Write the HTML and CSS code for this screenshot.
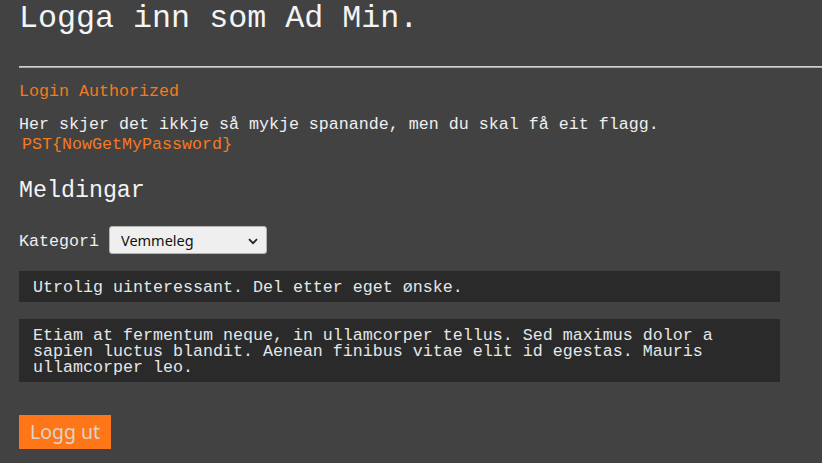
FILE: index.html
```html
<!DOCTYPE html>
<html lang="no">
<head>
<meta charset="utf-8">
<title>Ad Min</title>
<link rel="stylesheet" href="styles.css">
</head>
<body>
<main class="page">
  <h1 class="title">Logga inn som Ad Min.</h1>
  <hr class="rule">
  <p class="status">Login Authorized</p>
  <p class="intro">Her skjer det ikkje så mykje spanande, men du skal få eit flagg. <span class="flag">PST{NowGetMyPassword}</span></p>
  <h2 class="heading">Meldingar</h2>
  <div class="filter">
    <label class="filter-label" for="kat">Kategori</label>
    <select class="filter-select" id="kat">
      <option>Vemmeleg</option>
    </select>
  </div>
  <div class="messages">
    <div class="message">Utrolig uinteressant. Del etter eget ønske.</div>
    <div class="message">Etiam at fermentum neque, in ullamcorper tellus. Sed maximus dolor a sapien luctus blandit. Aenean finibus vitae elit id egestas. Mauris ullamcorper leo.</div>
  </div>
  <button class="logout" type="button">Logg ut</button>
</main>
</body>
</html>
```

FILE: styles.css
```css
html, body {
  margin: 0;
  padding: 0;
  background: #424242;
  color: #f0f0f0;
  overflow: hidden;
}

.page {
  padding: 1px 0 0 19px;
  font-family: "Liberation Mono", "Courier New", monospace;
  font-size: 16.67px;
}

.title {
  margin: 0;
  font-family: "Liberation Mono", "Courier New", monospace;
  font-size: 31.7px;
  font-weight: normal;
  line-height: 36px;
  color: #f4f4f4;
}

.rule {
  margin: 29px 0 0 0;
  border: 0;
  border-top: 1px solid #cfcfcf;
  border-bottom: 1px solid #a8a8a8;
  height: 0;
}

.status {
  margin: 13.5px 0 0 0;
  line-height: 20px;
  color: #f47a20;
}

.intro {
  margin: 13px 0 0 0;
  line-height: 20px;
  width: 700px;
  color: #efefef;
}

.flag {
  color: #f47a20;
  padding-left: 3px;
}

.heading {
  margin: 23px 0 0 0;
  font-family: "Liberation Mono", "Courier New", monospace;
  font-size: 23.3px;
  font-weight: normal;
  line-height: 26.4px;
  color: #f4f4f4;
}

.filter {
  display: flex;
  align-items: center;
  gap: 10px;
  margin-top: 22px;
  height: 28px;
}

.filter-label {
  line-height: 20px;
  padding-top: 4px;
  color: #efefef;
}

.filter-select {
  appearance: none;
  -webkit-appearance: none;
  width: 158px;
  height: 28px;
  box-sizing: border-box;
  padding: 0 0 0 11px;
  border: 1px solid #b4b4b4;
  border-radius: 3px;
  background-color: #efefef;
  background-image: url("data:image/svg+xml;utf8,<svg xmlns='http://www.w3.org/2000/svg' width='10' height='7' viewBox='0 0 10 7'><path d='M1 1.2 L5 5.2 L9 1.2' fill='none' stroke='%23222' stroke-width='1.8'/></svg>");
  background-repeat: no-repeat;
  background-position: 138px 11px;
  font-family: "Noto Sans", "Open Sans", sans-serif;
  font-size: 14.5px;
  color: #111;
}

.messages {
  display: flex;
  flex-direction: column;
  gap: 17px;
  margin-top: 17px;
  width: 761px;
}

.message {
  background: #2a2a2a;
  padding: 9.5px 14px 5.5px 14px;
  line-height: 16px;
  color: #e6e6e6;
}

.logout {
  display: block;
  margin-top: 33px;
  height: 34px;
  padding: 0 11px 0 11px;
  border: 0;
  background: #fe7617;
  color: #dcd3ca;
  font-family: "Noto Sans", "Open Sans", sans-serif;
  font-size: 19.5px;
  line-height: 34px;
}
```
